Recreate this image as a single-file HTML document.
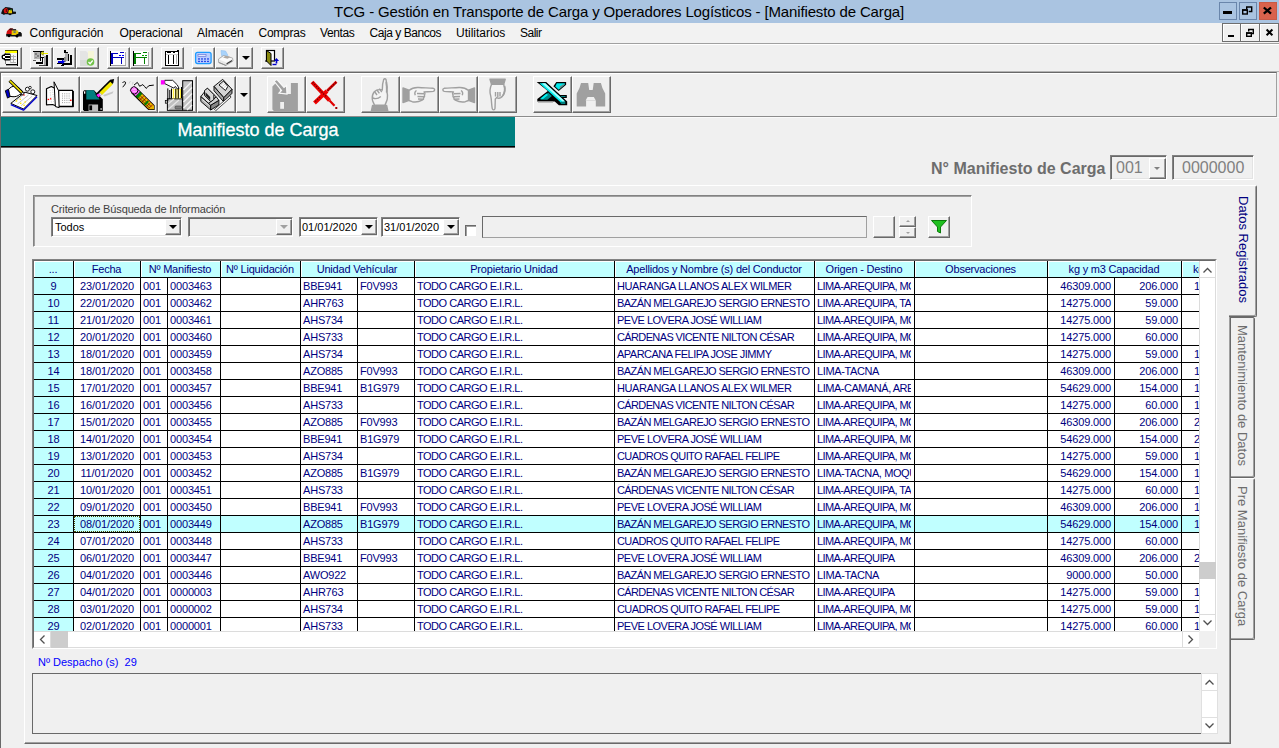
<!DOCTYPE html>
<html lang="es">
<head>
<meta charset="utf-8">
<title>TCG - Gestión en Transporte de Carga y Operadores Logísticos - [Manifiesto de Carga]</title>
<style>
html,body{margin:0;padding:0}
body{width:1279px;height:748px;background:#f0f0f0;position:relative;overflow:hidden;font-family:"Liberation Sans",sans-serif;font-size:11px;color:#000}
div,span{position:absolute;box-sizing:border-box;white-space:nowrap}
svg{position:absolute;overflow:visible}
#title{left:0;top:0;width:1279px;height:23px;background:#aac4e1}
#title .t{left:0;width:1238px;top:2px;text-align:center;font-size:15px;letter-spacing:-0.14px;line-height:19px;color:#000}
.tb{top:2px;width:18px;height:18px;border:1px solid #6a86ab;background:#aac4e1}
#menu{left:0;top:23px;width:1279px;height:20px;background:#f2f2f2}
#menu span{top:3px;font-size:12px;line-height:15px;color:#000}
.mb{top:24px;width:18px;height:18px;background:#f0f0f0;border:1px solid;border-color:#fff #696969 #696969 #fff}
.hl1{left:0;width:1279px;height:1px}
/* raised button */
.btn{background:#f0f0f0;border:1px solid;border-color:#fff #696969 #696969 #fff;box-shadow:inset -1px -1px 0 #a0a0a0}
.sb{top:47px;width:23px;height:22px}
.bb{top:76px;width:39px;height:37px}
/* grid */
#grid{left:32px;top:259px;width:1185px;height:390px;border:1px solid;border-color:#828282 #fff #fff #828282;background:#fff}
#gridin{left:33px;top:260px;width:1183px;height:388px;border:1px solid;border-color:#696969 #e3e3e3 #e3e3e3 #696969;background:#fff}
#lines{left:34px;top:261px;width:1165px;height:370px;background:#000}

.c{background:#fff;color:#000080;font-size:11px;line-height:15px;padding:1px 0 0 2px;overflow:hidden}
.c.ix{background:#c0ffff;text-align:center;padding-left:0}
.c.ce{letter-spacing:-0.1px;text-align:center;padding-left:0}
.c.nu{letter-spacing:-0.15px}
.c.un{letter-spacing:-0.2px}
.c.ri{letter-spacing:-0.15px;text-align:right;padding-right:3px;padding-left:0}
.c.or{border-right:3px solid #fff}
.c.or.sel{border-right-color:#c0ffff}
.c.sel{background:#c0ffff}
.c.foc{outline:1px dotted #4a4a00;outline-offset:-1px}
.c.last{padding-left:12px}
.h{letter-spacing:-0.2px;height:16px;background:#c0ffff;color:#000080;font-size:11px;line-height:14px;text-align:center;border-left:1px solid #fff;border-top:1px solid #fff;overflow:hidden;padding-right:2px}
.h.hl{text-align:left;padding-left:10px}
.sunk{border:1px solid;border-color:#828282 #fff #fff #828282;box-shadow:inset 1px 1px 0 #696969,inset -1px -1px 0 #e3e3e3}
.arrow{width:0;height:0;border-left:4px solid transparent;border-right:4px solid transparent;border-top:4px solid #000}
.vt{font-size:13px;line-height:14px;writing-mode:vertical-rl;transform:translateX(-50%)}
</style>
</head>
<body>
<!-- title bar -->
<div id="title">
<div class="t">TCG - Gestión en Transporte de Carga y Operadores Logísticos - [Manifiesto de Carga]</div>
<svg width="17" height="10" viewBox="0 6 17 10" style="left:0;top:6px"><path d="M1 13.500l1.500-4l3-2.500l4 .5l3.500 1v3l3 .3v2l-4 .5l-2 1l-2-1h-3l-1 .7l-1.200-.7z" fill="#101010"/><path d="M4.500 8.500l2.500-.5l1 2.500l-1 2.500l-2.500 .3l-.8-2.500z" fill="#d81010"/><rect x="5.800" y="9" width="1" height="3" fill="#500"/><path d="M8.800 10h3.200v3.200h-3.800z" fill="#e0c000"/><rect x="10.300" y="9.300" width="1.500" height="1.200" fill="#208020"/></svg>
<div class="tb" style="left:1219px"></div>
<div class="tb" style="left:1239px"></div>
<div class="tb" style="left:1259px;background:#d9624c;border-color:#c85a46"></div>
<svg width="60" height="23" viewBox="1219 0 60 23" style="left:1219px;top:0">
<rect x="1223" y="11" width="9" height="3" fill="#000"/>
<path d="M1246.700 9v-2h5v4.500h-3" fill="none" stroke="#000" stroke-width="1.400"/>
<rect x="1242.700" y="10" width="4.600" height="4" fill="none" stroke="#000" stroke-width="1.400"/><rect x="1242" y="9.300" width="6" height="1.500" fill="#000"/>
<path d="M1263.800 7.500l7.200 6.200M1271 7.500l-7.200 6.200" stroke="#000" stroke-width="2.300" fill="none"/>
</svg>
</div>
<!-- menu bar -->
<div id="menu">
<span style="left:29.500px">Configuración</span>
<span style="left:119.500px;letter-spacing:-0.160px">Operacional</span>
<span style="left:197px">Almacén</span>
<span style="left:258.500px;letter-spacing:-0.240px">Compras</span>
<span style="left:320px;letter-spacing:-0.370px">Ventas</span>
<span style="left:369.500px;letter-spacing:-0.450px">Caja y Bancos</span>
<span style="left:456px">Utilitarios</span>
<span style="left:520px;letter-spacing:-0.500px">Salir</span>
<svg width="18" height="10" viewBox="5 27 18 10" style="left:5px;top:4px"><path d="M6.200 34.500l.8-3.500l3-2.500l3.200 .2v6z" fill="#d01010"/><path d="M8.500 29.500l2-1.300l2.700 .3l-1.700 2z" fill="#401010"/><path d="M12.300 29h3.700l.5 2h-4.200z" fill="#303030"/><path d="M11.700 30.500h6.500l.5 4h-7z" fill="#e8c800"/><rect x="13.500" y="31.300" width="2.200" height="1.600" fill="#5a6a80"/><path d="M6.200 34h12l.3-2h2l1.300 1.500v3h-15.600z" fill="#101010"/><rect x="11.500" y="34" width="5" height="1" fill="#e8c800"/><circle cx="9" cy="36" r="1.200" fill="#000"/><circle cx="17" cy="36.200" r="1.300" fill="#000"/></svg>
</div>
<div style="left:1222px;top:23px;width:57px;height:19px;border:1px solid #6e6e6e;background:#f0f0f0;box-shadow:inset 1px 1px 0 #fff"></div>
<div style="left:1240px;top:24px;width:1px;height:17px;background:#6e6e6e"></div><div style="left:1241px;top:24px;width:1px;height:17px;background:#fff"></div>
<div style="left:1259px;top:24px;width:1px;height:17px;background:#6e6e6e"></div><div style="left:1260px;top:24px;width:1px;height:17px;background:#fff"></div>
<svg width="57" height="19" viewBox="1222 23 57 19" style="left:1222px;top:23px">
<rect x="1228" y="35" width="6" height="2" fill="#000"/>
<path d="M1248.700 31.500v-2h4.600v4h-2" fill="none" stroke="#000" stroke-width="1.400"/>
<rect x="1246.700" y="33" width="4.600" height="3.300" fill="none" stroke="#000" stroke-width="1.400"/><rect x="1246" y="32.300" width="6" height="1.500" fill="#000"/>
<path d="M1266.600 29.500l5.800 5.800M1272.400 29.500l-5.800 5.800" stroke="#000" stroke-width="2" fill="none"/>
</svg>
<div class="hl1" style="top:43px;background:#a0a0a0"></div>
<div class="hl1" style="top:44px;background:#fff"></div>

<!-- toolbar 1 -->
<div class="btn sb" style="left:-1px"></div>
<div class="btn sb" style="left:30px"></div>
<div class="btn sb" style="left:53px"></div>
<div class="btn sb" style="left:76px"></div>
<div class="btn sb" style="left:107px"></div>
<div class="btn sb" style="left:130px"></div>
<div class="btn sb" style="left:161px"></div>
<div class="btn sb" style="left:192px"></div>
<div class="btn sb" style="left:215px"></div>
<div class="btn sb" style="left:238px;width:15px"><div class="arrow" style="left:3px;top:8px"></div></div>
<div class="btn sb" style="left:261px"></div>

<!-- toolbar 2 frame -->
<div class="hl1" style="top:71px;background:#b4b4b4"></div>
<div style="left:0;top:72px;width:1277px;height:45px;border:1px solid;border-color:#696969 #a0a0a0 #8c8c8c #696969;box-shadow:inset 1px 1px 0 #fff"></div>
<div class="hl1" style="top:117px;left:515px;width:764px;background:#fafafa"></div>
<div class="btn bb" style="left:2px"></div>
<div class="btn bb" style="left:41px"></div>
<div class="btn bb" style="left:80px"></div>
<div class="btn bb" style="left:119px"></div>
<div class="btn bb" style="left:158px"></div>
<div class="btn bb" style="left:197px"></div>
<div class="btn bb" style="left:236px;width:15px"><div class="arrow" style="left:3px;top:16px"></div></div>
<div class="btn bb" style="left:267px"></div>
<div class="btn bb" style="left:306px"></div>
<div class="btn bb" style="left:361px"></div>
<div class="btn bb" style="left:400px"></div>
<div class="btn bb" style="left:439px"></div>
<div class="btn bb" style="left:478px"></div>
<div class="btn bb" style="left:533px"></div>
<div class="btn bb" style="left:572px"></div>
<svg id="ico1" width="300" height="30" viewBox="0 44 300 30" style="left:0;top:44px" shape-rendering="crispEdges">
<!-- A: form with plug -->
<g>
<rect x="5" y="50" width="12" height="1" fill="#505000"/>
<rect x="5" y="51" width="12" height="2" fill="#ffff00"/>
<rect x="6" y="53" width="11" height="11" fill="#f4f4f4"/>
<rect x="5" y="53" width="1" height="11" fill="#808080"/>
<rect x="17" y="50" width="1" height="16" fill="#000"/>
<rect x="6" y="64" width="12" height="1" fill="#000"/>
<rect x="6" y="65" width="11" height="1" fill="#9a9a9a"/>
<rect x="11" y="56" width="5" height="1" fill="#b0b0b0"/><rect x="11" y="59" width="5" height="1" fill="#b0b0b0"/><rect x="11" y="62" width="5" height="1" fill="#b0b0b0"/>
<rect x="13" y="55" width="1" height="8" fill="#b0b0b0"/><rect x="10" y="55" width="1" height="8" fill="#c0c0c0"/>
<rect x="4" y="53.500" width="6.500" height="7" rx="1" fill="#000" shape-rendering="auto"/>
<ellipse cx="3.800" cy="57" rx="2.300" ry="2.600" fill="#000" shape-rendering="auto"/>
<rect x="5" y="55" width="4.500" height="1.300" fill="#fff"/><rect x="5" y="57.700" width="4.500" height="1.300" fill="#fff"/>
<rect x="2.500" y="56.200" width="2" height="1.600" fill="#fff"/>
</g>
<!-- B -->
<g>
<rect x="34" y="52" width="6" height="7" fill="#b4b4b4"/>
<rect x="35" y="53" width="2" height="2" fill="#808080"/><rect x="37" y="55" width="2" height="2" fill="#808080"/><rect x="35" y="57" width="2" height="1" fill="#909090"/>
<rect x="33" y="51" width="11" height="1" fill="#000"/>
<rect x="33" y="60" width="3" height="1" fill="#606060"/>
<rect x="40" y="52" width="1" height="9" fill="#000"/>
<rect x="41" y="57" width="5" height="1" fill="#000"/>
<rect x="36" y="62" width="7" height="1.500" fill="#000"/>
<rect x="42" y="58" width="1" height="4" fill="#000"/>
<rect x="44" y="56" width="2" height="9" fill="#a8a8a8"/>
<rect x="46" y="55" width="1.500" height="11" fill="#000"/>
<rect x="39" y="65" width="7" height="1" fill="#404040"/>
<rect x="42" y="52.500" width="5.500" height="1.500" fill="#f0f000"/>
<path d="M40.500 53.200l2.800-2.200v4.400z" fill="#f0f000" stroke="#303000" stroke-width=".4" shape-rendering="auto"/>
</g>
<!-- C -->
<g>
<rect x="64" y="50" width="2" height="3" fill="#000"/>
<rect x="66" y="52" width="1.500" height="2.500" fill="#000"/>
<rect x="67.500" y="53.500" width="1.200" height="7.500" fill="#000"/>
<rect x="65" y="53" width="2.500" height="7.500" fill="#b0b0b0"/>
<rect x="64" y="57" width="1.500" height="5" fill="#909090"/>
<rect x="70" y="55" width="1.700" height="9.500" fill="#000"/>
<rect x="62" y="63" width="9.700" height="1.600" fill="#000"/>
<rect x="57.300" y="58.300" width="6.700" height="1.200" fill="#000"/>
<rect x="57.300" y="62.800" width="4.500" height="1.200" fill="#000"/>
<rect x="61" y="64.500" width="3" height="1.200" fill="#000"/>
<rect x="58.400" y="61" width="4" height="1.600" fill="#0000e0"/>
<path d="M62 59.300l3 2.500l-3 2.500z" fill="#0000e0" shape-rendering="auto"/>
</g>
<!-- D: faded doc with green check -->
<g shape-rendering="auto">
<path d="M80 51h6l3 3v11h-9z" fill="#e4e4e4"/>
<rect x="88" y="51" width="6" height="10" fill="#f6f6d8"/>
<path d="M80 60h8v6h-8z" fill="#d8dcd8"/>
<circle cx="90.500" cy="62" r="3.800" fill="#72c24a"/>
<path d="M88.500 62l1.600 1.700l2.600-3.200" fill="none" stroke="#fff" stroke-width="1.300"/>
</g>
<!-- E blue table -->
<g>
<rect x="110" y="51" width="16" height="15" fill="#fff"/><rect x="125" y="52" width="1" height="14" fill="#b0b0b0"/><rect x="111" y="65" width="15" height="1" fill="#a0a0a0"/>
<rect x="110" y="51" width="1" height="15" fill="#000"/>
<rect x="111" y="53" width="1.500" height="11" fill="#0000c0"/>
<rect x="111" y="53" width="7" height="1" fill="#0000c0"/>
<rect x="120" y="52" width="4" height="1" fill="#0000c0"/>
<rect x="119" y="55" width="2" height="1" fill="#0000ff"/><rect x="122" y="55" width="2" height="1" fill="#0000ff"/>
<rect x="111" y="57" width="13" height="1.300" fill="#0000c0"/>
<rect x="121" y="57" width="1.300" height="7" fill="#0000c0"/>
</g>
<!-- F green table -->
<g>
<rect x="133" y="51" width="16" height="15" fill="#fff"/><rect x="148" y="52" width="1" height="14" fill="#b0b0b0"/><rect x="134" y="65" width="15" height="1" fill="#a0a0a0"/>
<rect x="133" y="51" width="1" height="15" fill="#000"/>
<rect x="134" y="53" width="1.500" height="11" fill="#008000"/>
<rect x="134" y="53" width="7" height="1" fill="#008000"/>
<rect x="143" y="52" width="4" height="1" fill="#008000"/>
<rect x="142" y="55" width="2" height="1" fill="#00a000"/><rect x="145" y="55" width="2" height="1" fill="#00a000"/>
<rect x="134" y="57" width="13" height="1.300" fill="#008000"/>
<rect x="144" y="57" width="1.300" height="7" fill="#008000"/>
</g>
<!-- G -->
<g>
<rect x="165.500" y="51" width="13" height="14.500" fill="#fff" stroke="#000" stroke-width="1"/>
<rect x="167" y="51" width="4" height="2" fill="#000"/><rect x="173" y="51" width="2" height="1.500" fill="#000"/><rect x="177" y="50" width="1.500" height="2" fill="#000"/>
<rect x="168" y="55" width="1.200" height="9" fill="#000"/><rect x="173" y="55" width="1.200" height="9" fill="#000"/><rect x="175.500" y="55" width="1" height="9" fill="#b0b0b0"/>
<rect x="166" y="54" width="12" height="1" fill="#d0d0d0"/>
</g>
<!-- H calculator -->
<g shape-rendering="auto">
<rect x="195.600" y="52.400" width="15.500" height="11.200" rx="2" fill="#b9cdff" stroke="#1e9bff" stroke-width="1.300"/>
<rect x="198" y="54.500" width="8" height="2" fill="#dfe8ff" stroke="#6a78d8" stroke-width=".7"/>
<g fill="#2a4ae8"><rect x="198" y="58.300" width="2" height="1.300"/><rect x="201" y="58.300" width="2" height="1.300"/><rect x="204" y="58.300" width="2" height="1.300"/><rect x="207" y="58.300" width="2" height="1.300"/>
<rect x="198" y="60.800" width="2" height="1.300"/><rect x="201" y="60.800" width="2" height="1.300"/><rect x="204" y="60.800" width="2" height="1.300"/><rect x="207" y="60.800" width="2" height="1.300"/></g>
</g>
<!-- I printer -->
<g shape-rendering="auto">
<path d="M221 50.500l4.500 0.500l2 3.500l0.500 3l-5 1.500l-1.500-4z" fill="#a9d3fb" stroke="#8ec0f0" stroke-width=".6"/>
<path d="M218.500 59l5-3.500l9 2.500l0.500 3l-7 4.500l-7.500-3z" fill="#e8e8e8" stroke="#a0a0a0" stroke-width=".8"/>
<path d="M219 59.500l5-3l8.500 2.300l-6 3.700z" fill="#fbfbfb"/>
<path d="M223 57.500l3-1.800l4.500 1.200l-3 1.800z" fill="#b0a8a0"/>
<path d="M226.500 63.300l5.500-3.300v1.200l-5.500 3.300z" fill="#303030"/>
<path d="M219 62.500l7 3" stroke="#909090" stroke-width="1" fill="none"/>
</g>
<!-- dropdown arrow drawn in html -->
<!-- K door -->
<g shape-rendering="auto">
<rect x="266.500" y="50.500" width="8" height="10.500" fill="#fff" stroke="#000" stroke-width="1.200"/>
<path d="M266.500 50.500l4.500 3v12l-4.500-4.500z" fill="#8a8a10" stroke="#000" stroke-width="1"/>
<rect x="265" y="60.500" width="2" height="1" fill="#000"/>
<path d="M276.500 58l2.600 3h-1.800v2.500h-1.600v-2.500h-1.800z" fill="#0000c8"/>
<path d="M272.500 64.500h4" stroke="#0000c8" stroke-width="1.400"/>
</g>
</svg>
<svg id="ico2" width="640" height="44" viewBox="0 74 640 44" style="left:0;top:74px">
<!-- 1 hand writing on notepad -->
<g stroke-linejoin="round">
<path d="M10.800 103.400L24.900 92.200L37 95.500L23.500 109z" fill="#fff" stroke="#000" stroke-width="1"/>
<path d="M10.800 104.600L23.500 110.200L37 96.800" fill="none" stroke="#0000d0" stroke-width="1.300"/>
<path d="M14.500 102l10.500-8.500M17.500 104l11-9M21 105.800l11-9.500" stroke="#b8b8b8" stroke-width=".8" fill="none"/>
<g fill="#ffe800"><rect x="15.800" y="100.300" width="1.400" height="1.400"/><rect x="19.600" y="98.600" width="1.400" height="1.400"/><rect x="23.400" y="104.600" width="1.400" height="1.400"/><rect x="24.500" y="101.300" width="1.400" height="1.400"/><rect x="20" y="102.600" width="1.400" height="1.400"/></g>
<circle cx="27.400" cy="89.200" r="2" fill="#fff" stroke="#000" stroke-width=".9"/><circle cx="32.800" cy="91.800" r="2" fill="#fff" stroke="#000" stroke-width=".9"/><circle cx="30" cy="87.600" r="1.300" fill="#fff" stroke="#000" stroke-width=".8"/>
<path d="M8.500 89.500c1.500-2 4-3.500 6.500-3.300c2 .2 3.500 1.200 5 2.600l3.500 3.800c.8 1 .2 2.200-1 2.200l-3-.3c-1.500 1.700-4 2.300-6.500 2.200l-4.500-.5z" fill="#fff" stroke="#000" stroke-width="1"/>
<path d="M5.300 90.800l3.200-1.600l1.600 7.500l-2.600 1.400z" fill="#0000c8" stroke="#000" stroke-width=".9"/>
<path d="M9.600 80.600L22.300 93" stroke="#000" stroke-width="3.200" stroke-linecap="butt"/>
<path d="M9.900 80.900L21.800 92.500" stroke="#f4e400" stroke-width="1.600"/>
<rect x="23.300" y="94.400" width="1.300" height="1.300" fill="#e00000"/>
</g>
<!-- 2 open book -->
<g stroke-linejoin="round">
<path d="M46.500 88.800l4.800-2.300l5 2.500l2.300 18l-6-2.500l-6.100 .3z" fill="#fff" stroke="#000" stroke-width="1.200"/>
<path d="M58.600 90.400h14v15.800h-14z" fill="#fff" stroke="#000" stroke-width="1.100"/>
<path d="M58.600 106.600h14.600v-15.500" fill="none" stroke="#000" stroke-width="1.400"/>
<path d="M54 81.800l4.600 9l.5 16.800l-3.700-1z" fill="#fff" stroke="#000" stroke-width="1"/>
<path d="M50 90l1.500 13M52.500 89.500l1.500 14" stroke="#c0c0c0" stroke-width=".8" stroke-dasharray="1 1.300"/>
<g fill="#a0a0a0"><rect x="62" y="93.300" width="1" height="1"/><rect x="64.200" y="93.300" width="1" height="1"/><rect x="66.400" y="93.300" width="1" height="1"/><rect x="68.600" y="93.300" width="1" height="1"/>
<rect x="62" y="95.500" width="1" height="1"/><rect x="64.200" y="95.500" width="1" height="1"/><rect x="66.400" y="95.500" width="1" height="1"/><rect x="68.600" y="95.500" width="1" height="1"/>
<rect x="62" y="97.700" width="1" height="1"/><rect x="64.200" y="97.700" width="1" height="1"/><rect x="66.400" y="97.700" width="1" height="1"/><rect x="68.600" y="97.700" width="1" height="1"/>
<rect x="62" y="99.900" width="1" height="1"/><rect x="64.200" y="99.900" width="1" height="1"/><rect x="66.400" y="99.900" width="1" height="1"/><rect x="68.600" y="99.900" width="1" height="1"/>
<rect x="62" y="102.100" width="1" height="1"/><rect x="64.200" y="102.100" width="1" height="1"/><rect x="66.400" y="102.100" width="1" height="1"/><rect x="68.600" y="102.100" width="1" height="1"/></g>
<rect x="47.600" y="98.800" width="1.600" height="1.300" fill="#f00"/><rect x="50" y="98.200" width="1.300" height="1.200" fill="#f00"/><rect x="70" y="99.600" width="1.600" height="1.300" fill="#f00"/>
</g>
<!-- 3 floppy + pencil -->
<g>
<path d="M83 91.500l1.200-1.200h9.800l8.800 9v11.700h-18.600l-1.200-1.200z" fill="#000"/>
<path d="M86.300 90.300h7.600l1 2.200l4.800 6.900h-13.400z" fill="#008080"/>
<rect x="84" y="91.300" width="1.300" height="2.400" fill="#fff"/>
<rect x="88.600" y="104.500" width="9.500" height="6.500" fill="#c0c0c0"/>
<rect x="89.300" y="105.400" width="2.800" height="4.800" fill="#000"/>
<rect x="100.500" y="108" width="1.200" height="2" fill="#c0c0c0"/>
<path d="M103 95l10.500-3.800l-1 2.400l-8 3z" fill="#c8c8c8"/>
<path d="M97.200 97.200l-1.800-2.900l14.700-14.500l4-.8l-.8 4l-14.500 14.500z" fill="#000"/>
<path d="M99.500 92.500l10.800-10.800l2.500 2.500l-10.800 10.800z" fill="#f2e600"/>
<path d="M98.600 94l1.300-1.300l1.900 1.900l-1.300 1.300z" fill="#e8e8e8"/>
<path d="M96.300 94.900l2.300-1.300l1.900 1.900l-1.900 2z" fill="#ff20ff"/>
</g>
<!-- 4 eraser pencil with scribble -->
<g stroke-linejoin="round">
<path d="M122.600 82.800c.8-1.500 3-1.500 3 0c0 1.500-2 3-2.800 4.400M134 85.100c1-1 2.300-1.700 3.300-2.700c1.200 1 1.400 2.800 2.200 3.800c1.300-.2 2.200-1.100 3.300-1.600c1.400 .9 2.100 2.700 3.300 3.800c1.200-.5 1.800-1.900 2.700-2.700l5-.6" fill="none" stroke="#000" stroke-width="1"/>
<path d="M129 83.500l1.500-2.500M133 82l-.5 2.500" stroke="#c8c8c8" stroke-width=".8"/>
<path d="M131.300 93.200l5.500-5.500l17.800 17.600v4.700h-6.300z" fill="#000"/>
<path d="M137.500 97.800l4.200-4.200l12.300 12.200v3.400h-5.200z" fill="#e8b400"/>
<path d="M139.700 100l4.200-4.200M141.900 102.200l4.200-4.200M144.100 104.400l4.200-4.200M146.300 106.600l4.200-4.200M148.500 108.800l4.200-4.200" stroke="#c00000" stroke-width=".8"/>
<path d="M140 95.500l11 11M138.500 97l11 11" stroke="#000" stroke-width=".6"/>
<path d="M135.600 96l4.300-4.300l2.300 2.300l-4.300 4.300z" fill="#008000"/>
<path d="M144 104l3.600-3.600l1.400 1.400l-3.600 3.600z" fill="#008000"/>
<path d="M133.800 94.300l4.400-4.400l1.700 1.800l-4.300 4.300z" fill="#ff60ff"/>
<ellipse cx="134.200" cy="90.400" rx="3.500" ry="3.700" fill="#ff70ff" stroke="#000" stroke-width=".9" transform="rotate(-45 134.200 90.400)"/>
<path d="M132.500 89l1 1M134.500 89l1 1M133.500 91l1 1M135.500 91l1 1M133.500 87.500l1 1" stroke="#fff" stroke-width=".8"/>
</g>
<!-- 5 file cabinet -->
<g stroke-linejoin="miter">
<rect x="182.700" y="80.700" width="9.800" height="29.600" fill="#c4c4c4" stroke="#000" stroke-width="1"/>
<path d="M183.500 90l8-8M183.500 96l8.500-8.500M183.500 102l8.500-8.500M183.500 108l8.500-8.500M187 110l5-5" stroke="#f4f4f4" stroke-width="1.400"/>
<rect x="167.400" y="98.800" width="15" height="11.500" fill="#c0c0c0" stroke="#000" stroke-width="1"/>
<path d="M168 104l6-5M168 109.500l11-9.500" stroke="#e8e8e8" stroke-width="1.200"/>
<rect x="171.800" y="89" width="10" height="9.300" fill="#ffef40"/>
<path d="M172.500 89.500v8.500M174.500 89.500v8.500M177 89.500v8.500M179.500 89.500v8.500" stroke="#fff" stroke-width=".8"/>
<path d="M171.500 88.500v10M175.800 88.500v10M178.300 88.500v10M181.500 87v11" stroke="#000" stroke-width="1"/>
<path d="M167.800 88.400v12.500M169.800 90v9" stroke="#000" stroke-width="1"/>
<rect x="175" y="106" width="6.500" height="3" rx="1" fill="#808080" stroke="#404040" stroke-width=".6"/>
<rect x="165.300" y="100.600" width="2" height="2.600" fill="#c0c0c0" stroke="#000" stroke-width=".7"/>
<path d="M164.700 80.300h8l4.600 4.600l1.700 3.500l-1.700 .5l-2-2.500l-1.500 1.700l-3-1.500l-6.100-3z" fill="#fff" stroke="#000" stroke-width=".9"/>
<rect x="160.900" y="80.200" width="3.800" height="4.300" fill="#ff00ff"/>
</g>
<!-- 6 computer + printer -->
<g stroke-linejoin="round" stroke="#000" stroke-width=".9">
<path d="M222.700 79.300l9.300 10l-8.200 8.400l-9.800-11.300z" fill="#d4d4d4"/>
<path d="M214 86.400l9.800 11.300v4.300l-9.800-11.300z" fill="#a8a8a8"/>
<path d="M232 89.300v4l-8.200 8.700v-4.300z" fill="#909090"/>
<path d="M219 85l4.500-4l4.300 5.500l-2.300 4z" fill="#fff"/>
<path d="M221 85l3-2.500M222.200 86.500l3-2.500M223.400 88l3-2.500" stroke="#b0b0b0" stroke-width=".6"/>
<path d="M214.500 109.300l15.300-13.500l1.300 1.300l-15.300 13.500z" fill="#fff" stroke-width=".7"/>
<path d="M207.400 88.300l8.800 8.500l-7.500 6.700l-7.900-6.900z" fill="#e0e0e0"/>
<path d="M200.800 96.600l9.900 8.600v4.800l-9.900-8.600z" fill="#b0b0b0"/>
<path d="M218.900 100.300v4.600l-8.200 5.100v-4.800z" fill="#888"/>
<path d="M210.700 105.200l8.200-4.900l-2.700-3.500l-7.500 6.700z" fill="#d0d0d0"/>
<path d="M204.500 90.500l3-2.300l6.300 6.300v5l-3 2.200l-6.300-6.300z" fill="#d8d8d8"/>
<path d="M205.500 92.200l4.700 4.700v3.300l-4.700-4.700z" fill="#202020" stroke="none"/>
<path d="M202 99.200l7.500 6.500" stroke="#fff" stroke-width=".7"/>
</g>
<!-- 7 save disabled -->
<g fill="#a0a0a0">
<path d="M272.400 86.500l3.500-3.500h4v11h11v-11h7v28h-24l-1.500-1.500z"/>
<rect x="280.200" y="102" width="3.800" height="6.800" fill="#f0f0f0"/>
<path d="M274 81l3-1.500l7 8l2.500-2l.5 8.500l-8-1l2.500-2.500z" fill="#a0a0a0" stroke="#f8f8f8" stroke-width="1.200"/>
</g>
<!-- 8 red X -->
<g fill="none">
<path d="M312 82L329.500 100.500" stroke="#e80000" stroke-width="4"/>
<path d="M329.500 100.500l5 5.300" stroke="#e00000" stroke-width="2.200"/>
<rect x="335.300" y="107" width="2" height="2" fill="#a00000"/>
<path d="M336.500 81.800L327 91" stroke="#d80000" stroke-width="2.600"/>
<path d="M327 91l-12.500 12" stroke="#f00000" stroke-width="4"/>
<path d="M312.500 82.300l14 14.500M336 82.500l-9 8.800M320 97l-5 4.800" stroke="#700000" stroke-width="1.300" stroke-dasharray="1.300 1.300"/>
</g>
<!-- 9 hand up disabled -->
<g stroke="#a0a0a0" stroke-width="1.400" fill="#f4f4f4" stroke-linejoin="round">
<path d="M372.600 105.400h14l1.200 5.500h-16.400z" fill="#a0a0a0"/>
<path d="M382.300 90c0-4 .5-8 1.400-10.500c.8-1.200 2-1 2.400 .3c.5 3.500 .3 7.500 .6 11c.8 2.700 1 5.200 .6 8c-.4 2.500-1.700 4.300-2.300 6.500h-10.500c-.5-2-2-3.800-2.200-6c-.3-3 .3-5.500 2-7.500c2-2 5-2.500 8-1.800z"/>
<path d="M386.300 82c.8 3 .8 7 .4 10.500" stroke-width="1.800" fill="none"/>
<path d="M374.500 91.500l2.500 3.500M376.800 89.800l2.600 3.600M379.300 88.600l2.500 3.600M372.800 98c2.500 1 6 .3 8-1.500" fill="none"/>
</g>
<!-- 10 hand right disabled -->
<g stroke="#a0a0a0" stroke-width="1.400" fill="#f4f4f4" stroke-linejoin="round">
<path d="M403 88l6 2.200v10.200l-6 2.200z" fill="#a0a0a0"/>
<path d="M409 90.500c2.500-2.200 6-3.200 9.500-3c5 .5 10 .3 14.800 .8c1.800 .5 1.800 2.600 0 3.100c-3 .5-6.300 .3-9.300 .5c1.200 1 1.200 2.200 .3 3c.6 1 .3 2.200-.7 2.800c.3 1-.3 2-1.400 2.500c-3 1.500-6.500 2.200-10 1.500l-3.200-1.200z"/>
<path d="M417 93.500l7 .3M417.500 96.500l6.500 .3M418 99l5.500 .3M416.500 90.500c-1.500 1-2 3-1.200 4.800" fill="none"/>
</g>
<!-- 11 hand left disabled -->
<g stroke="#a0a0a0" stroke-width="1.400" fill="#f4f4f4" stroke-linejoin="round" transform="translate(877.500 0) scale(-1 1)">
<path d="M403 88l6 2.200v10.200l-6 2.200z" fill="#a0a0a0"/>
<path d="M409 90.500c2.500-2.200 6-3.200 9.500-3c5 .5 10 .3 14.800 .8c1.800 .5 1.800 2.600 0 3.100c-3 .5-6.300 .3-9.300 .5c1.200 1 1.200 2.200 .3 3c.6 1 .3 2.200-.7 2.800c.3 1-.3 2-1.400 2.500c-3 1.500-6.500 2.200-10 1.500l-3.200-1.200z"/>
<path d="M417 93.500l7 .3M417.500 96.500l6.500 .3M418 99l5.500 .3M416.500 90.500c-1.500 1-2 3-1.200 4.800" fill="none"/>
</g>
<!-- 12 hand down disabled -->
<g stroke="#a0a0a0" stroke-width="1.400" fill="#f4f4f4" stroke-linejoin="round">
<path d="M490 79.200h15.200l-1.500 5h-12.200z" fill="#a0a0a0"/>
<path d="M491.600 84.200h12c.8 2 1.300 4 1 6.500c-.3 3-1.500 5.500-3.800 7c-1.500 .8-3 .6-4-.3l-1.500 1.500l-.3 9.500c-.3 2-2.400 2-2.800 0c-.8-4-.5-8.500-1.500-12.500c-1.200-3.800-.8-8 .9-11.700z"/>
<path d="M504.500 86c.8 3 .3 6.500-1.500 9.500" stroke-width="1.800" fill="none"/>
<path d="M495.500 96.500v-4.500M497.800 97v-5M500 96.500v-4.500" fill="none"/>
</g>
<!-- 13 excel X -->
<g stroke-linejoin="miter">
<path d="M536.700 81.900h9.500l21 19.500v3.800h-8.300l-4.200-3.700h-17.400v-2.500l10.500-8z" fill="#000"/>
<path d="M556.300 81.900h9.800v2.800l-7.400 6.300l-5.300-4.700z" fill="#000"/>
<path d="M558.500 95h8.300v3h-5z" fill="#000"/>
<path d="M539.500 83.200h5.800l19.800 18.300l-4.800 .6z" fill="#00f0f0"/>
<path d="M542 83.200h3.300l19.800 18.300l-2.400 .3z" fill="#aaffff"/>
<path d="M559.700 102.300l5.600-.7v2.300h-4z" fill="#008080"/>
<path d="M556.800 83.200h8v1.300l-6 5.200l-3.600-3.200z" fill="#00e8e8"/>
<path d="M560 86.500l4-2.500v1l-4.500 3.800z" fill="#808080"/>
<path d="M548.200 92.500l3.700 3.400l-4.500 3.800h-7.300z" fill="#008888"/>
<path d="M540 98.800l6.500-5.200l1.500 1.300l-5 4z" fill="#00f0f0"/>
<rect x="538" y="101" width="15" height="1.500" fill="#909090"/>
<path d="M560.500 96h5v1h-4z" fill="#008080"/>
</g>
<!-- 14 binoculars disabled -->
<g fill="#a0a0a0">
<path d="M581 83h7.200l1 7h3.500l1-7h7.200l1.500 5l2.800 5.500v13h-9.400v-6h-9.700v6h-9.400v-13l2.800-5.500z"/>
<path d="M585.600 100.500l2-3.500h6.200l2 3.500z" fill="#f0f0f0"/>
</g>
</svg>


<!-- teal banner -->
<div style="left:1px;top:117px;width:514px;height:29px;background:#008080;color:#fff;font-size:18px;line-height:27px;text-align:center;-webkit-text-stroke:0.3px #fff">Manifiesto de Carga</div>
<div style="left:1px;top:146px;width:514px;height:1px;background:#000"></div><div style="left:1px;top:147px;width:514px;height:1px;background:#5a5a5a"></div>
<div style="left:0;top:117px;width:1px;height:631px;background:#696969"></div>

<!-- Nº Manifiesto -->
<div style="left:931px;top:160px;font-size:16px;font-weight:bold;color:#6d6d6d;line-height:18px">N° Manifiesto de Carga</div>
<div class="sunk" style="left:1110px;top:155px;width:57px;height:25px;background:#f0f0f0"><span style="left:5px;top:3px;font-size:16px;line-height:18px;color:#808080">001</span>
<div class="btn" style="left:38px;top:2px;width:17px;height:21px"><div class="arrow" style="left:4px;top:8px;border-top-color:#808080;border-width:3px 3px 0 3px;border-top-style:solid"></div></div></div>
<div class="sunk" style="left:1172px;top:155px;width:82px;height:25px;background:#f0f0f0"><span style="left:9px;top:3px;font-size:16px;line-height:18px;color:#808080">0000000</span></div>

<!-- tab control -->
<div style="left:24px;top:185px;width:1207px;height:559px;border:1px solid;border-color:#fff #696969 #696969 #fff;box-shadow:inset -1px -1px 0 #a0a0a0"></div>
<div id="tab1" style="left:1229px;top:185px;width:28px;height:132px;background:#f0f0f0;border:1px solid;border-color:#fff #696969 #696969 #f0f0f0;border-left:0;box-shadow:inset -1px -1px 0 #a0a0a0;border-radius:0 2px 2px 0"></div>
<div id="tab2" style="left:1230px;top:317px;width:25px;height:161px;border:1px solid;border-color:#696969 #696969 #696969 #696969;box-shadow:inset -1px -1px 0 #a0a0a0;border-radius:0 2px 2px 0"></div>
<div id="tab3" style="left:1230px;top:478px;width:25px;height:162px;border:1px solid;border-color:#fff #696969 #696969 #696969;box-shadow:inset -1px -1px 0 #a0a0a0;border-radius:0 2px 2px 0"></div>
<div class="vt" style="left:1243px;top:196px;color:#000080">Datos Registrados</div>
<div class="vt" style="left:1242px;top:325px;color:#6d6d6d">Mantenimiento de Datos</div>
<div class="vt" style="left:1242px;top:486px;color:#6d6d6d">Pre Manifiesto de Carga</div>

<!-- search frame -->
<div style="left:33px;top:195px;width:939px;height:52px;border:1px solid;border-color:#828282 #fff #fff #828282;box-shadow:inset 1px 1px 0 #a0a0a0"></div>
<div style="left:51px;top:203px;font-size:11px;line-height:13px;color:#404040;letter-spacing:-0.14px">Criterio de Búsqueda de Información</div>
<div class="sunk" style="left:51px;top:217px;width:131px;height:20px;background:#fff"><span style="left:3px;top:3px;font-size:11px;line-height:13px">Todos</span>
<div class="btn" style="left:113px;top:1px;width:16px;height:16px"><div class="arrow" style="left:3px;top:5px"></div></div></div>
<div class="sunk" style="left:188px;top:217px;width:105px;height:20px;background:#f0f0f0">
<div class="btn" style="left:87px;top:1px;width:16px;height:16px"><div class="arrow" style="left:3px;top:5px;border-top-color:#a0a0a0"></div></div></div>
<div class="sunk" style="left:299px;top:217px;width:79px;height:20px;background:#fff"><span style="left:2px;top:3px;font-size:11px;line-height:13px">01/01/2020</span>
<div class="btn" style="left:61px;top:1px;width:16px;height:16px"><div class="arrow" style="left:3px;top:5px"></div></div></div>
<div class="sunk" style="left:381px;top:217px;width:79px;height:20px;background:#fff"><span style="left:2px;top:3px;font-size:11px;line-height:13px">31/01/2020</span>
<div class="btn" style="left:61px;top:1px;width:16px;height:16px"><div class="arrow" style="left:3px;top:5px"></div></div></div>
<div style="left:465px;top:225px;width:11px;height:11px;background:#fff;border-top:1px solid #696969;border-left:1px solid #696969;box-shadow:inset 1px 1px 0 #a0a0a0"></div>
<div style="left:482px;top:216px;width:385px;height:22px;border:1px solid;border-color:#696969 #a0a0a0 #a0a0a0 #696969;background:#f0f0f0"></div>
<div class="btn" style="left:873px;top:216px;width:22px;height:22px"></div>
<div class="btn" style="left:899px;top:216px;width:17px;height:11px"><div class="arrow" style="left:6px;top:3px;border-width:0 2px 2px 2px;border-style:solid;border-color:transparent transparent #a0a0a0 transparent"></div></div>
<div class="btn" style="left:899px;top:227px;width:17px;height:11px"><div class="arrow" style="left:6px;top:4px;border-width:2px 2px 0 2px;border-top-color:#a0a0a0"></div></div>
<div class="btn" style="left:928px;top:216px;width:22px;height:22px"><svg width="20" height="20" style="left:0;top:0"><path d="M2.5 3.5h15l-6 6.5v6l-3-1.5v-4.5z" fill="#1fc01f" stroke="#0a7a0a" stroke-width="1"/></svg></div>

<!-- grid -->
<div id="grid"></div>
<div id="gridin"></div>
<div id="lines"></div>
<div class="h" style="left:34px;top:261px;width:39px">...</div>
<div class="h" style="left:74px;top:261px;width:66px">Fecha</div>
<div class="h" style="left:141px;top:261px;width:79px">Nº Manifiesto</div>
<div class="h" style="left:221px;top:261px;width:79px">Nº Liquidación</div>
<div class="h" style="left:301px;top:261px;width:113px">Unidad Vehícular</div>
<div class="h" style="left:415px;top:261px;width:199px">Propietario Unidad</div>
<div class="h" style="left:615px;top:261px;width:199px">Apellidos y Nombre (s) del Conductor</div>
<div class="h" style="left:815px;top:261px;width:99px">Origen - Destino</div>
<div class="h" style="left:915px;top:261px;width:132px">Observaciones</div>
<div class="h" style="left:1048px;top:261px;width:133px">kg y m3 Capacidad</div>
<div class="h hl" style="left:1182px;top:261px;width:17px">kg y m3 Carga</div>
<div class="c ix" style="left:34px;top:278px;width:39px;height:16px">9</div>
<div class="c ce" style="left:74px;top:278px;width:66px;height:16px">23/01/2020</div>
<div class="c nu" style="left:141px;top:278px;width:26px;height:16px">001</div>
<div class="c nu" style="left:168px;top:278px;width:52px;height:16px">0003463</div>
<div class="c " style="left:221px;top:278px;width:79px;height:16px"></div>
<div class="c un" style="left:301px;top:278px;width:56px;height:16px">BBE941</div>
<div class="c un" style="left:358px;top:278px;width:56px;height:16px">F0V993</div>
<div class="c " style="left:415px;top:278px;width:199px;height:16px;letter-spacing:-0.485px">TODO CARGO E.I.R.L.</div>
<div class="c " style="left:615px;top:278px;width:199px;height:16px;letter-spacing:-0.420px">HUARANGA LLANOS ALEX WILMER</div>
<div class="c or" style="left:815px;top:278px;width:99px;height:16px;letter-spacing:-0.603px">LIMA-AREQUIPA, MOQUEGUA</div>
<div class="c " style="left:915px;top:278px;width:132px;height:16px"></div>
<div class="c ri" style="left:1048px;top:278px;width:66px;height:16px">46309.000</div>
<div class="c ri" style="left:1115px;top:278px;width:66px;height:16px">206.000</div>
<div class="c  last" style="left:1182px;top:278px;width:17px;height:16px">1</div>
<div class="c ix" style="left:34px;top:295px;width:39px;height:16px">10</div>
<div class="c ce" style="left:74px;top:295px;width:66px;height:16px">22/01/2020</div>
<div class="c nu" style="left:141px;top:295px;width:26px;height:16px">001</div>
<div class="c nu" style="left:168px;top:295px;width:52px;height:16px">0003462</div>
<div class="c " style="left:221px;top:295px;width:79px;height:16px"></div>
<div class="c un" style="left:301px;top:295px;width:56px;height:16px">AHR763</div>
<div class="c un" style="left:358px;top:295px;width:56px;height:16px"></div>
<div class="c " style="left:415px;top:295px;width:199px;height:16px;letter-spacing:-0.485px">TODO CARGO E.I.R.L.</div>
<div class="c " style="left:615px;top:295px;width:199px;height:16px;letter-spacing:-0.565px">BAZÁN MELGAREJO SERGIO ERNESTO</div>
<div class="c or" style="left:815px;top:295px;width:99px;height:16px;letter-spacing:-0.603px">LIMA-AREQUIPA, TACNA</div>
<div class="c " style="left:915px;top:295px;width:132px;height:16px"></div>
<div class="c ri" style="left:1048px;top:295px;width:66px;height:16px">14275.000</div>
<div class="c ri" style="left:1115px;top:295px;width:66px;height:16px">59.000</div>
<div class="c  last" style="left:1182px;top:295px;width:17px;height:16px"></div>
<div class="c ix" style="left:34px;top:312px;width:39px;height:16px">11</div>
<div class="c ce" style="left:74px;top:312px;width:66px;height:16px">21/01/2020</div>
<div class="c nu" style="left:141px;top:312px;width:26px;height:16px">001</div>
<div class="c nu" style="left:168px;top:312px;width:52px;height:16px">0003461</div>
<div class="c " style="left:221px;top:312px;width:79px;height:16px"></div>
<div class="c un" style="left:301px;top:312px;width:56px;height:16px">AHS734</div>
<div class="c un" style="left:358px;top:312px;width:56px;height:16px"></div>
<div class="c " style="left:415px;top:312px;width:199px;height:16px;letter-spacing:-0.485px">TODO CARGO E.I.R.L.</div>
<div class="c " style="left:615px;top:312px;width:199px;height:16px;letter-spacing:-0.500px">PEVE LOVERA JOSÉ WILLIAM</div>
<div class="c or" style="left:815px;top:312px;width:99px;height:16px;letter-spacing:-0.603px">LIMA-AREQUIPA, MOQUEGUA</div>
<div class="c " style="left:915px;top:312px;width:132px;height:16px"></div>
<div class="c ri" style="left:1048px;top:312px;width:66px;height:16px">14275.000</div>
<div class="c ri" style="left:1115px;top:312px;width:66px;height:16px">59.000</div>
<div class="c  last" style="left:1182px;top:312px;width:17px;height:16px"></div>
<div class="c ix" style="left:34px;top:329px;width:39px;height:16px">12</div>
<div class="c ce" style="left:74px;top:329px;width:66px;height:16px">20/01/2020</div>
<div class="c nu" style="left:141px;top:329px;width:26px;height:16px">001</div>
<div class="c nu" style="left:168px;top:329px;width:52px;height:16px">0003460</div>
<div class="c " style="left:221px;top:329px;width:79px;height:16px"></div>
<div class="c un" style="left:301px;top:329px;width:56px;height:16px">AHS733</div>
<div class="c un" style="left:358px;top:329px;width:56px;height:16px"></div>
<div class="c " style="left:415px;top:329px;width:199px;height:16px;letter-spacing:-0.485px">TODO CARGO E.I.R.L.</div>
<div class="c " style="left:615px;top:329px;width:199px;height:16px;letter-spacing:-0.627px">CÁRDENAS VICENTE NILTON CÉSAR</div>
<div class="c or" style="left:815px;top:329px;width:99px;height:16px;letter-spacing:-0.603px">LIMA-AREQUIPA, MOQUEGUA</div>
<div class="c " style="left:915px;top:329px;width:132px;height:16px"></div>
<div class="c ri" style="left:1048px;top:329px;width:66px;height:16px">14275.000</div>
<div class="c ri" style="left:1115px;top:329px;width:66px;height:16px">60.000</div>
<div class="c  last" style="left:1182px;top:329px;width:17px;height:16px"></div>
<div class="c ix" style="left:34px;top:346px;width:39px;height:16px">13</div>
<div class="c ce" style="left:74px;top:346px;width:66px;height:16px">18/01/2020</div>
<div class="c nu" style="left:141px;top:346px;width:26px;height:16px">001</div>
<div class="c nu" style="left:168px;top:346px;width:52px;height:16px">0003459</div>
<div class="c " style="left:221px;top:346px;width:79px;height:16px"></div>
<div class="c un" style="left:301px;top:346px;width:56px;height:16px">AHS734</div>
<div class="c un" style="left:358px;top:346px;width:56px;height:16px"></div>
<div class="c " style="left:415px;top:346px;width:199px;height:16px;letter-spacing:-0.485px">TODO CARGO E.I.R.L.</div>
<div class="c " style="left:615px;top:346px;width:199px;height:16px;letter-spacing:-0.508px">APARCANA FELIPA JOSE JIMMY</div>
<div class="c or" style="left:815px;top:346px;width:99px;height:16px;letter-spacing:-0.603px">LIMA-AREQUIPA, MOQUEGUA</div>
<div class="c " style="left:915px;top:346px;width:132px;height:16px"></div>
<div class="c ri" style="left:1048px;top:346px;width:66px;height:16px">14275.000</div>
<div class="c ri" style="left:1115px;top:346px;width:66px;height:16px">59.000</div>
<div class="c  last" style="left:1182px;top:346px;width:17px;height:16px">1</div>
<div class="c ix" style="left:34px;top:363px;width:39px;height:16px">14</div>
<div class="c ce" style="left:74px;top:363px;width:66px;height:16px">18/01/2020</div>
<div class="c nu" style="left:141px;top:363px;width:26px;height:16px">001</div>
<div class="c nu" style="left:168px;top:363px;width:52px;height:16px">0003458</div>
<div class="c " style="left:221px;top:363px;width:79px;height:16px"></div>
<div class="c un" style="left:301px;top:363px;width:56px;height:16px">AZO885</div>
<div class="c un" style="left:358px;top:363px;width:56px;height:16px">F0V993</div>
<div class="c " style="left:415px;top:363px;width:199px;height:16px;letter-spacing:-0.485px">TODO CARGO E.I.R.L.</div>
<div class="c " style="left:615px;top:363px;width:199px;height:16px;letter-spacing:-0.565px">BAZÁN MELGAREJO SERGIO ERNESTO</div>
<div class="c or" style="left:815px;top:363px;width:99px;height:16px;letter-spacing:-0.381px">LIMA-TACNA</div>
<div class="c " style="left:915px;top:363px;width:132px;height:16px"></div>
<div class="c ri" style="left:1048px;top:363px;width:66px;height:16px">46309.000</div>
<div class="c ri" style="left:1115px;top:363px;width:66px;height:16px">206.000</div>
<div class="c  last" style="left:1182px;top:363px;width:17px;height:16px">1</div>
<div class="c ix" style="left:34px;top:380px;width:39px;height:16px">15</div>
<div class="c ce" style="left:74px;top:380px;width:66px;height:16px">17/01/2020</div>
<div class="c nu" style="left:141px;top:380px;width:26px;height:16px">001</div>
<div class="c nu" style="left:168px;top:380px;width:52px;height:16px">0003457</div>
<div class="c " style="left:221px;top:380px;width:79px;height:16px"></div>
<div class="c un" style="left:301px;top:380px;width:56px;height:16px">BBE941</div>
<div class="c un" style="left:358px;top:380px;width:56px;height:16px">B1G979</div>
<div class="c " style="left:415px;top:380px;width:199px;height:16px;letter-spacing:-0.485px">TODO CARGO E.I.R.L.</div>
<div class="c " style="left:615px;top:380px;width:199px;height:16px;letter-spacing:-0.420px">HUARANGA LLANOS ALEX WILMER</div>
<div class="c or" style="left:815px;top:380px;width:99px;height:16px;letter-spacing:-0.477px">LIMA-CAMANÁ, AREQUIPA</div>
<div class="c " style="left:915px;top:380px;width:132px;height:16px"></div>
<div class="c ri" style="left:1048px;top:380px;width:66px;height:16px">54629.000</div>
<div class="c ri" style="left:1115px;top:380px;width:66px;height:16px">154.000</div>
<div class="c  last" style="left:1182px;top:380px;width:17px;height:16px">1</div>
<div class="c ix" style="left:34px;top:397px;width:39px;height:16px">16</div>
<div class="c ce" style="left:74px;top:397px;width:66px;height:16px">16/01/2020</div>
<div class="c nu" style="left:141px;top:397px;width:26px;height:16px">001</div>
<div class="c nu" style="left:168px;top:397px;width:52px;height:16px">0003456</div>
<div class="c " style="left:221px;top:397px;width:79px;height:16px"></div>
<div class="c un" style="left:301px;top:397px;width:56px;height:16px">AHS733</div>
<div class="c un" style="left:358px;top:397px;width:56px;height:16px"></div>
<div class="c " style="left:415px;top:397px;width:199px;height:16px;letter-spacing:-0.485px">TODO CARGO E.I.R.L.</div>
<div class="c " style="left:615px;top:397px;width:199px;height:16px;letter-spacing:-0.627px">CÁRDENAS VICENTE NILTON CÉSAR</div>
<div class="c or" style="left:815px;top:397px;width:99px;height:16px;letter-spacing:-0.603px">LIMA-AREQUIPA, MOQUEGUA</div>
<div class="c " style="left:915px;top:397px;width:132px;height:16px"></div>
<div class="c ri" style="left:1048px;top:397px;width:66px;height:16px">14275.000</div>
<div class="c ri" style="left:1115px;top:397px;width:66px;height:16px">60.000</div>
<div class="c  last" style="left:1182px;top:397px;width:17px;height:16px">1</div>
<div class="c ix" style="left:34px;top:414px;width:39px;height:16px">17</div>
<div class="c ce" style="left:74px;top:414px;width:66px;height:16px">15/01/2020</div>
<div class="c nu" style="left:141px;top:414px;width:26px;height:16px">001</div>
<div class="c nu" style="left:168px;top:414px;width:52px;height:16px">0003455</div>
<div class="c " style="left:221px;top:414px;width:79px;height:16px"></div>
<div class="c un" style="left:301px;top:414px;width:56px;height:16px">AZO885</div>
<div class="c un" style="left:358px;top:414px;width:56px;height:16px">F0V993</div>
<div class="c " style="left:415px;top:414px;width:199px;height:16px;letter-spacing:-0.485px">TODO CARGO E.I.R.L.</div>
<div class="c " style="left:615px;top:414px;width:199px;height:16px;letter-spacing:-0.565px">BAZÁN MELGAREJO SERGIO ERNESTO</div>
<div class="c or" style="left:815px;top:414px;width:99px;height:16px;letter-spacing:-0.603px">LIMA-AREQUIPA, MOQUEGUA</div>
<div class="c " style="left:915px;top:414px;width:132px;height:16px"></div>
<div class="c ri" style="left:1048px;top:414px;width:66px;height:16px">46309.000</div>
<div class="c ri" style="left:1115px;top:414px;width:66px;height:16px">206.000</div>
<div class="c  last" style="left:1182px;top:414px;width:17px;height:16px">2</div>
<div class="c ix" style="left:34px;top:431px;width:39px;height:16px">18</div>
<div class="c ce" style="left:74px;top:431px;width:66px;height:16px">14/01/2020</div>
<div class="c nu" style="left:141px;top:431px;width:26px;height:16px">001</div>
<div class="c nu" style="left:168px;top:431px;width:52px;height:16px">0003454</div>
<div class="c " style="left:221px;top:431px;width:79px;height:16px"></div>
<div class="c un" style="left:301px;top:431px;width:56px;height:16px">BBE941</div>
<div class="c un" style="left:358px;top:431px;width:56px;height:16px">B1G979</div>
<div class="c " style="left:415px;top:431px;width:199px;height:16px;letter-spacing:-0.485px">TODO CARGO E.I.R.L.</div>
<div class="c " style="left:615px;top:431px;width:199px;height:16px;letter-spacing:-0.500px">PEVE LOVERA JOSÉ WILLIAM</div>
<div class="c or" style="left:815px;top:431px;width:99px;height:16px;letter-spacing:-0.603px">LIMA-AREQUIPA, MOQUEGUA</div>
<div class="c " style="left:915px;top:431px;width:132px;height:16px"></div>
<div class="c ri" style="left:1048px;top:431px;width:66px;height:16px">54629.000</div>
<div class="c ri" style="left:1115px;top:431px;width:66px;height:16px">154.000</div>
<div class="c  last" style="left:1182px;top:431px;width:17px;height:16px">2</div>
<div class="c ix" style="left:34px;top:448px;width:39px;height:16px">19</div>
<div class="c ce" style="left:74px;top:448px;width:66px;height:16px">13/01/2020</div>
<div class="c nu" style="left:141px;top:448px;width:26px;height:16px">001</div>
<div class="c nu" style="left:168px;top:448px;width:52px;height:16px">0003453</div>
<div class="c " style="left:221px;top:448px;width:79px;height:16px"></div>
<div class="c un" style="left:301px;top:448px;width:56px;height:16px">AHS734</div>
<div class="c un" style="left:358px;top:448px;width:56px;height:16px"></div>
<div class="c " style="left:415px;top:448px;width:199px;height:16px;letter-spacing:-0.485px">TODO CARGO E.I.R.L.</div>
<div class="c " style="left:615px;top:448px;width:199px;height:16px;letter-spacing:-0.593px">CUADROS QUITO RAFAEL FELIPE</div>
<div class="c or" style="left:815px;top:448px;width:99px;height:16px;letter-spacing:-0.603px">LIMA-AREQUIPA, MOQUEGUA</div>
<div class="c " style="left:915px;top:448px;width:132px;height:16px"></div>
<div class="c ri" style="left:1048px;top:448px;width:66px;height:16px">14275.000</div>
<div class="c ri" style="left:1115px;top:448px;width:66px;height:16px">59.000</div>
<div class="c  last" style="left:1182px;top:448px;width:17px;height:16px">1</div>
<div class="c ix" style="left:34px;top:465px;width:39px;height:16px">20</div>
<div class="c ce" style="left:74px;top:465px;width:66px;height:16px">11/01/2020</div>
<div class="c nu" style="left:141px;top:465px;width:26px;height:16px">001</div>
<div class="c nu" style="left:168px;top:465px;width:52px;height:16px">0003452</div>
<div class="c " style="left:221px;top:465px;width:79px;height:16px"></div>
<div class="c un" style="left:301px;top:465px;width:56px;height:16px">AZO885</div>
<div class="c un" style="left:358px;top:465px;width:56px;height:16px">B1G979</div>
<div class="c " style="left:415px;top:465px;width:199px;height:16px;letter-spacing:-0.485px">TODO CARGO E.I.R.L.</div>
<div class="c " style="left:615px;top:465px;width:199px;height:16px;letter-spacing:-0.565px">BAZÁN MELGAREJO SERGIO ERNESTO</div>
<div class="c or" style="left:815px;top:465px;width:99px;height:16px;letter-spacing:-0.396px">LIMA-TACNA, MOQUEGUA</div>
<div class="c " style="left:915px;top:465px;width:132px;height:16px"></div>
<div class="c ri" style="left:1048px;top:465px;width:66px;height:16px">54629.000</div>
<div class="c ri" style="left:1115px;top:465px;width:66px;height:16px">154.000</div>
<div class="c  last" style="left:1182px;top:465px;width:17px;height:16px">1</div>
<div class="c ix" style="left:34px;top:482px;width:39px;height:16px">21</div>
<div class="c ce" style="left:74px;top:482px;width:66px;height:16px">10/01/2020</div>
<div class="c nu" style="left:141px;top:482px;width:26px;height:16px">001</div>
<div class="c nu" style="left:168px;top:482px;width:52px;height:16px">0003451</div>
<div class="c " style="left:221px;top:482px;width:79px;height:16px"></div>
<div class="c un" style="left:301px;top:482px;width:56px;height:16px">AHS733</div>
<div class="c un" style="left:358px;top:482px;width:56px;height:16px"></div>
<div class="c " style="left:415px;top:482px;width:199px;height:16px;letter-spacing:-0.485px">TODO CARGO E.I.R.L.</div>
<div class="c " style="left:615px;top:482px;width:199px;height:16px;letter-spacing:-0.627px">CÁRDENAS VICENTE NILTON CÉSAR</div>
<div class="c or" style="left:815px;top:482px;width:99px;height:16px;letter-spacing:-0.603px">LIMA-AREQUIPA, TACNA</div>
<div class="c " style="left:915px;top:482px;width:132px;height:16px"></div>
<div class="c ri" style="left:1048px;top:482px;width:66px;height:16px">14275.000</div>
<div class="c ri" style="left:1115px;top:482px;width:66px;height:16px">60.000</div>
<div class="c  last" style="left:1182px;top:482px;width:17px;height:16px">1</div>
<div class="c ix" style="left:34px;top:499px;width:39px;height:16px">22</div>
<div class="c ce" style="left:74px;top:499px;width:66px;height:16px">09/01/2020</div>
<div class="c nu" style="left:141px;top:499px;width:26px;height:16px">001</div>
<div class="c nu" style="left:168px;top:499px;width:52px;height:16px">0003450</div>
<div class="c " style="left:221px;top:499px;width:79px;height:16px"></div>
<div class="c un" style="left:301px;top:499px;width:56px;height:16px">BBE941</div>
<div class="c un" style="left:358px;top:499px;width:56px;height:16px">F0V993</div>
<div class="c " style="left:415px;top:499px;width:199px;height:16px;letter-spacing:-0.485px">TODO CARGO E.I.R.L.</div>
<div class="c " style="left:615px;top:499px;width:199px;height:16px;letter-spacing:-0.500px">PEVE LOVERA JOSÉ WILLIAM</div>
<div class="c or" style="left:815px;top:499px;width:99px;height:16px;letter-spacing:-0.603px">LIMA-AREQUIPA, MOQUEGUA</div>
<div class="c " style="left:915px;top:499px;width:132px;height:16px"></div>
<div class="c ri" style="left:1048px;top:499px;width:66px;height:16px">46309.000</div>
<div class="c ri" style="left:1115px;top:499px;width:66px;height:16px">206.000</div>
<div class="c  last" style="left:1182px;top:499px;width:17px;height:16px">1</div>
<div class="c ix" style="left:34px;top:516px;width:39px;height:16px">23</div>
<div class="c ce sel foc" style="left:74px;top:516px;width:66px;height:16px">08/01/2020</div>
<div class="c nu sel" style="left:141px;top:516px;width:26px;height:16px">001</div>
<div class="c nu sel" style="left:168px;top:516px;width:52px;height:16px">0003449</div>
<div class="c  sel" style="left:221px;top:516px;width:79px;height:16px"></div>
<div class="c un sel" style="left:301px;top:516px;width:56px;height:16px">AZO885</div>
<div class="c un sel" style="left:358px;top:516px;width:56px;height:16px">B1G979</div>
<div class="c  sel" style="left:415px;top:516px;width:199px;height:16px;letter-spacing:-0.485px">TODO CARGO E.I.R.L.</div>
<div class="c  sel" style="left:615px;top:516px;width:199px;height:16px;letter-spacing:-0.565px">BAZÁN MELGAREJO SERGIO ERNESTO</div>
<div class="c or sel" style="left:815px;top:516px;width:99px;height:16px;letter-spacing:-0.603px">LIMA-AREQUIPA, MOQUEGUA</div>
<div class="c  sel" style="left:915px;top:516px;width:132px;height:16px"></div>
<div class="c ri sel" style="left:1048px;top:516px;width:66px;height:16px">54629.000</div>
<div class="c ri sel" style="left:1115px;top:516px;width:66px;height:16px">154.000</div>
<div class="c  sel last" style="left:1182px;top:516px;width:17px;height:16px">1</div>
<div class="c ix" style="left:34px;top:533px;width:39px;height:16px">24</div>
<div class="c ce" style="left:74px;top:533px;width:66px;height:16px">07/01/2020</div>
<div class="c nu" style="left:141px;top:533px;width:26px;height:16px">001</div>
<div class="c nu" style="left:168px;top:533px;width:52px;height:16px">0003448</div>
<div class="c " style="left:221px;top:533px;width:79px;height:16px"></div>
<div class="c un" style="left:301px;top:533px;width:56px;height:16px">AHS733</div>
<div class="c un" style="left:358px;top:533px;width:56px;height:16px"></div>
<div class="c " style="left:415px;top:533px;width:199px;height:16px;letter-spacing:-0.485px">TODO CARGO E.I.R.L.</div>
<div class="c " style="left:615px;top:533px;width:199px;height:16px;letter-spacing:-0.593px">CUADROS QUITO RAFAEL FELIPE</div>
<div class="c or" style="left:815px;top:533px;width:99px;height:16px;letter-spacing:-0.603px">LIMA-AREQUIPA, MOQUEGUA</div>
<div class="c " style="left:915px;top:533px;width:132px;height:16px"></div>
<div class="c ri" style="left:1048px;top:533px;width:66px;height:16px">14275.000</div>
<div class="c ri" style="left:1115px;top:533px;width:66px;height:16px">60.000</div>
<div class="c  last" style="left:1182px;top:533px;width:17px;height:16px"></div>
<div class="c ix" style="left:34px;top:550px;width:39px;height:16px">25</div>
<div class="c ce" style="left:74px;top:550px;width:66px;height:16px">06/01/2020</div>
<div class="c nu" style="left:141px;top:550px;width:26px;height:16px">001</div>
<div class="c nu" style="left:168px;top:550px;width:52px;height:16px">0003447</div>
<div class="c " style="left:221px;top:550px;width:79px;height:16px"></div>
<div class="c un" style="left:301px;top:550px;width:56px;height:16px">BBE941</div>
<div class="c un" style="left:358px;top:550px;width:56px;height:16px">F0V993</div>
<div class="c " style="left:415px;top:550px;width:199px;height:16px;letter-spacing:-0.485px">TODO CARGO E.I.R.L.</div>
<div class="c " style="left:615px;top:550px;width:199px;height:16px;letter-spacing:-0.500px">PEVE LOVERA JOSÉ WILLIAM</div>
<div class="c or" style="left:815px;top:550px;width:99px;height:16px;letter-spacing:-0.606px">LIMA-AREQUIPA</div>
<div class="c " style="left:915px;top:550px;width:132px;height:16px"></div>
<div class="c ri" style="left:1048px;top:550px;width:66px;height:16px">46309.000</div>
<div class="c ri" style="left:1115px;top:550px;width:66px;height:16px">206.000</div>
<div class="c  last" style="left:1182px;top:550px;width:17px;height:16px">2</div>
<div class="c ix" style="left:34px;top:567px;width:39px;height:16px">26</div>
<div class="c ce" style="left:74px;top:567px;width:66px;height:16px">04/01/2020</div>
<div class="c nu" style="left:141px;top:567px;width:26px;height:16px">001</div>
<div class="c nu" style="left:168px;top:567px;width:52px;height:16px">0003446</div>
<div class="c " style="left:221px;top:567px;width:79px;height:16px"></div>
<div class="c un" style="left:301px;top:567px;width:56px;height:16px">AWO922</div>
<div class="c un" style="left:358px;top:567px;width:56px;height:16px"></div>
<div class="c " style="left:415px;top:567px;width:199px;height:16px;letter-spacing:-0.485px">TODO CARGO E.I.R.L.</div>
<div class="c " style="left:615px;top:567px;width:199px;height:16px;letter-spacing:-0.565px">BAZÁN MELGAREJO SERGIO ERNESTO</div>
<div class="c or" style="left:815px;top:567px;width:99px;height:16px;letter-spacing:-0.381px">LIMA-TACNA</div>
<div class="c " style="left:915px;top:567px;width:132px;height:16px"></div>
<div class="c ri" style="left:1048px;top:567px;width:66px;height:16px">9000.000</div>
<div class="c ri" style="left:1115px;top:567px;width:66px;height:16px">50.000</div>
<div class="c  last" style="left:1182px;top:567px;width:17px;height:16px"></div>
<div class="c ix" style="left:34px;top:584px;width:39px;height:16px">27</div>
<div class="c ce" style="left:74px;top:584px;width:66px;height:16px">04/01/2020</div>
<div class="c nu" style="left:141px;top:584px;width:26px;height:16px">001</div>
<div class="c nu" style="left:168px;top:584px;width:52px;height:16px">0000003</div>
<div class="c " style="left:221px;top:584px;width:79px;height:16px"></div>
<div class="c un" style="left:301px;top:584px;width:56px;height:16px">AHR763</div>
<div class="c un" style="left:358px;top:584px;width:56px;height:16px"></div>
<div class="c " style="left:415px;top:584px;width:199px;height:16px;letter-spacing:-0.485px">TODO CARGO E.I.R.L.</div>
<div class="c " style="left:615px;top:584px;width:199px;height:16px;letter-spacing:-0.627px">CÁRDENAS VICENTE NILTON CÉSAR</div>
<div class="c or" style="left:815px;top:584px;width:99px;height:16px;letter-spacing:-0.606px">LIMA-AREQUIPA</div>
<div class="c " style="left:915px;top:584px;width:132px;height:16px"></div>
<div class="c ri" style="left:1048px;top:584px;width:66px;height:16px">14275.000</div>
<div class="c ri" style="left:1115px;top:584px;width:66px;height:16px">59.000</div>
<div class="c  last" style="left:1182px;top:584px;width:17px;height:16px">1</div>
<div class="c ix" style="left:34px;top:601px;width:39px;height:16px">28</div>
<div class="c ce" style="left:74px;top:601px;width:66px;height:16px">03/01/2020</div>
<div class="c nu" style="left:141px;top:601px;width:26px;height:16px">001</div>
<div class="c nu" style="left:168px;top:601px;width:52px;height:16px">0000002</div>
<div class="c " style="left:221px;top:601px;width:79px;height:16px"></div>
<div class="c un" style="left:301px;top:601px;width:56px;height:16px">AHS734</div>
<div class="c un" style="left:358px;top:601px;width:56px;height:16px"></div>
<div class="c " style="left:415px;top:601px;width:199px;height:16px;letter-spacing:-0.485px">TODO CARGO E.I.R.L.</div>
<div class="c " style="left:615px;top:601px;width:199px;height:16px;letter-spacing:-0.593px">CUADROS QUITO RAFAEL FELIPE</div>
<div class="c or" style="left:815px;top:601px;width:99px;height:16px;letter-spacing:-0.603px">LIMA-AREQUIPA, MOQUEGUA</div>
<div class="c " style="left:915px;top:601px;width:132px;height:16px"></div>
<div class="c ri" style="left:1048px;top:601px;width:66px;height:16px">14275.000</div>
<div class="c ri" style="left:1115px;top:601px;width:66px;height:16px">59.000</div>
<div class="c  last" style="left:1182px;top:601px;width:17px;height:16px">1</div>
<div class="c ix" style="left:34px;top:618px;width:39px;height:13px">29</div>
<div class="c ce" style="left:74px;top:618px;width:66px;height:13px">02/01/2020</div>
<div class="c nu" style="left:141px;top:618px;width:26px;height:13px">001</div>
<div class="c nu" style="left:168px;top:618px;width:52px;height:13px">0000001</div>
<div class="c " style="left:221px;top:618px;width:79px;height:13px"></div>
<div class="c un" style="left:301px;top:618px;width:56px;height:13px">AHS733</div>
<div class="c un" style="left:358px;top:618px;width:56px;height:13px"></div>
<div class="c " style="left:415px;top:618px;width:199px;height:13px;letter-spacing:-0.485px">TODO CARGO E.I.R.L.</div>
<div class="c " style="left:615px;top:618px;width:199px;height:13px;letter-spacing:-0.500px">PEVE LOVERA JOSÉ WILLIAM</div>
<div class="c or" style="left:815px;top:618px;width:99px;height:13px;letter-spacing:-0.603px">LIMA-AREQUIPA, MOQUEGUA</div>
<div class="c " style="left:915px;top:618px;width:132px;height:13px"></div>
<div class="c ri" style="left:1048px;top:618px;width:66px;height:13px">14275.000</div>
<div class="c ri" style="left:1115px;top:618px;width:66px;height:13px">60.000</div>
<div class="c  last" style="left:1182px;top:618px;width:17px;height:13px">1</div>
<!-- grid scrollbars -->
<div style="left:1199px;top:261px;width:17px;height:370px;background:#fff;border-left:1px solid #dcdcdc;border-right:1px solid #dcdcdc"></div>
<div style="left:1200px;top:277px;width:15px;height:1px;background:#dcdcdc"></div>
<div style="left:1200px;top:614px;width:15px;height:1px;background:#dcdcdc"></div>
<div style="left:1199px;top:562px;width:17px;height:17px;background:#cdcdcd"></div>
<svg width="17" height="17" style="left:1199px;top:262px"><path d="M4.5 10.5l4-4l4 4" fill="none" stroke="#505050" stroke-width="1.3"/></svg>
<svg width="17" height="17" style="left:1199px;top:614px"><path d="M4.5 6.5l4 4l4-4" fill="none" stroke="#505050" stroke-width="1.3"/></svg>
<div style="left:34px;top:631px;width:1165px;height:17px;background:#fff;border-top:1px solid #dcdcdc;border-bottom:1px solid #dcdcdc"></div>
<div style="left:50px;top:632px;width:1px;height:15px;background:#dcdcdc"></div>
<div style="left:1182px;top:632px;width:1px;height:15px;background:#dcdcdc"></div>
<div style="left:1199px;top:631px;width:17px;height:17px;background:#f0f0f0"></div>
<div style="left:51px;top:631px;width:17px;height:17px;background:#cdcdcd"></div>
<svg width="17" height="17" style="left:34px;top:631px"><path d="M10.5 4.5l-4 4l4 4" fill="none" stroke="#505050" stroke-width="1.3"/></svg>
<svg width="17" height="17" style="left:1182px;top:631px"><path d="M6.5 4.5l4 4l-4 4" fill="none" stroke="#505050" stroke-width="1.3"/></svg>

<div style="left:38px;top:656px;font-size:11px;line-height:13px;color:#0000ff">Nº Despacho (s)&nbsp; 29</div>

<!-- bottom text area -->
<div style="left:32px;top:673px;width:1170px;height:61px;border:1px solid;border-color:#696969 #696969 #696969 #696969;background:#f0f0f0"></div>
<div style="left:1201px;top:673px;width:17px;height:61px;background:#fff;border:1px solid #e0e0e0"></div>
<div style="left:1202px;top:690px;width:15px;height:1px;background:#e0e0e0"></div>
<div style="left:1202px;top:717px;width:15px;height:1px;background:#e0e0e0"></div>
<svg width="17" height="17" style="left:1201px;top:674px"><path d="M4.5 10.5l4-4l4 4" fill="none" stroke="#505050" stroke-width="1.3"/></svg>
<svg width="17" height="17" style="left:1201px;top:717px"><path d="M4.5 6.5l4 4l4-4" fill="none" stroke="#505050" stroke-width="1.3"/></svg>
</body>
</html>
